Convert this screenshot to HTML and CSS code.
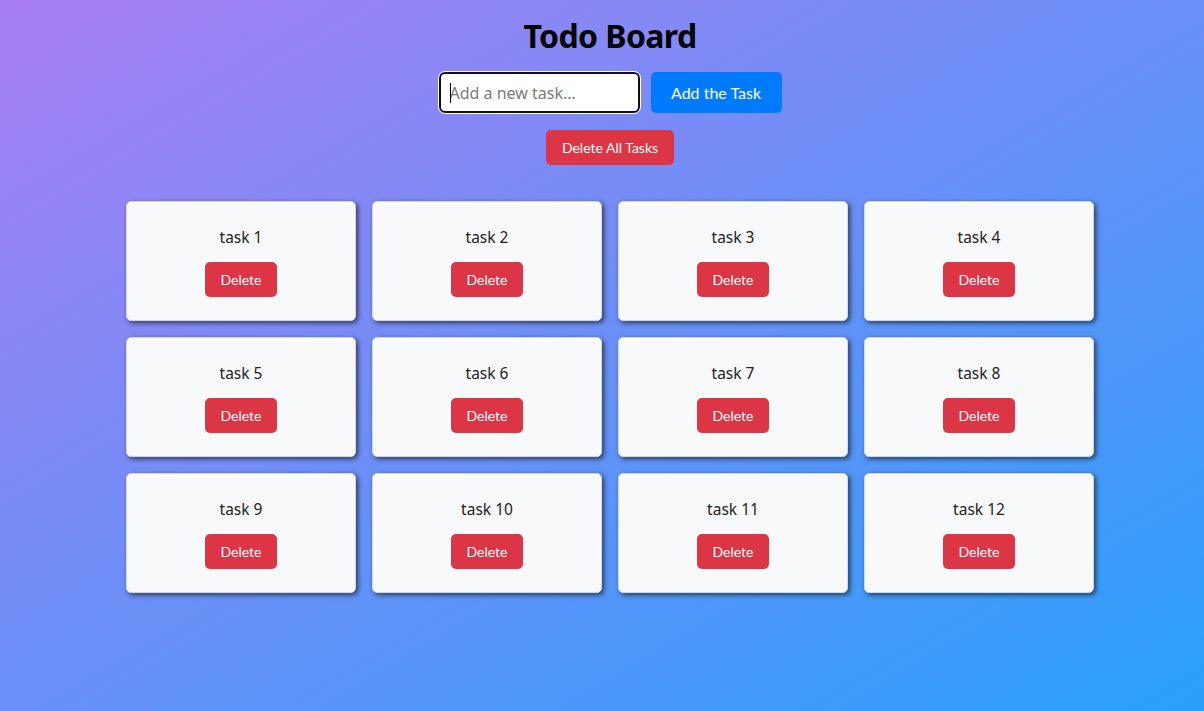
FILE: index.html
```html
<!DOCTYPE html>
<html lang="en">
<head>
<meta charset="utf-8">
<title>Todo Board</title>
<link rel="stylesheet" href="styles.css">
</head>
<body>
<div class="page">
  <h1 class="title">Todo Board</h1>
  <div class="add-row">
    <span class="input-wrap">
      <input class="task-input" type="text" placeholder="Add a new task...">
      <span class="caret"></span>
    </span>
    <button class="btn btn-add">Add the Task</button>
  </div>
  <button class="btn btn-danger btn-delete-all">Delete All Tasks</button>
  <div class="grid">
    <div class="card"><p class="card-text">task 1</p><button class="btn btn-danger btn-delete">Delete</button></div>
    <div class="card"><p class="card-text">task 2</p><button class="btn btn-danger btn-delete">Delete</button></div>
    <div class="card"><p class="card-text">task 3</p><button class="btn btn-danger btn-delete">Delete</button></div>
    <div class="card"><p class="card-text">task 4</p><button class="btn btn-danger btn-delete">Delete</button></div>
    <div class="card"><p class="card-text">task 5</p><button class="btn btn-danger btn-delete">Delete</button></div>
    <div class="card"><p class="card-text">task 6</p><button class="btn btn-danger btn-delete">Delete</button></div>
    <div class="card"><p class="card-text">task 7</p><button class="btn btn-danger btn-delete">Delete</button></div>
    <div class="card"><p class="card-text">task 8</p><button class="btn btn-danger btn-delete">Delete</button></div>
    <div class="card"><p class="card-text">task 9</p><button class="btn btn-danger btn-delete">Delete</button></div>
    <div class="card"><p class="card-text">task 10</p><button class="btn btn-danger btn-delete">Delete</button></div>
    <div class="card"><p class="card-text">task 11</p><button class="btn btn-danger btn-delete">Delete</button></div>
    <div class="card"><p class="card-text">task 12</p><button class="btn btn-danger btn-delete">Delete</button></div>
  </div>
</div>
</body>
</html>
```
FILE: styles.css
```css
html, body {
  margin: 0;
  padding: 0;
  height: 100%;
}
body {
  background: linear-gradient(to bottom right, #a97ff3, #29a0fb);
  font-family: "Noto Sans", "Open Sans", sans-serif;
  color: #1a1a1a;
  overflow: hidden;
}
.page {
  padding: 17px 0 0 16px;
  display: flex;
  flex-direction: column;
  align-items: center;
}
.title {
  margin: 0;
  font-size: 32px;
  line-height: 38px;
  font-weight: 700;
  letter-spacing: -0.6px;
  color: #000;
}
.add-row {
  margin-top: 17px;
  display: flex;
  align-items: center;
  gap: 11px;
}
.input-wrap {
  position: relative;
  display: inline-block;
}
.task-input {
  box-sizing: border-box;
  width: 201px;
  height: 41px;
  padding: 0 9px;
  border: 2px solid #101010;
  border-radius: 6px;
  outline: 1px solid #fff;
  background: #fff;
  font-family: "Noto Sans", sans-serif;
  font-size: 16px;
  color: #222;
  display: block;
}
.task-input::placeholder {
  color: #7a7a7a;
}
.caret {
  position: absolute;
  left: 11px;
  top: 11px;
  width: 1px;
  height: 20px;
  background: #000;
}
.btn {
  border: none;
  color: #fff;
  font-family: "Lato", sans-serif;
  cursor: pointer;
  border-radius: 5px;
  padding: 0;
}
.btn-add {
  width: 131px;
  height: 41px;
  background: #007bff;
  font-size: 16px;
}
.btn-danger {
  background: #dc3545;
}
.btn-delete-all {
  margin-top: 17px;
  width: 128px;
  height: 35px;
  font-size: 14px;
}
.grid {
  margin-top: 36px;
  display: grid;
  grid-template-columns: repeat(4, 230px);
  gap: 16px;
}
.card {
  box-sizing: border-box;
  height: 120px;
  background: #f8f9fa;
  border: 1px solid #d6d6d6;
  border-radius: 5px;
  box-shadow: 2px 2px 5px rgba(0, 0, 0, 0.6);
  display: flex;
  flex-direction: column;
  align-items: center;
  justify-content: center;
  gap: 14px;
}
.card-text {
  margin: 0;
  font-size: 15.5px;
  line-height: 22px;
  color: #222;
}
.btn-delete {
  width: 72px;
  height: 35px;
  font-size: 14px;
}
```
